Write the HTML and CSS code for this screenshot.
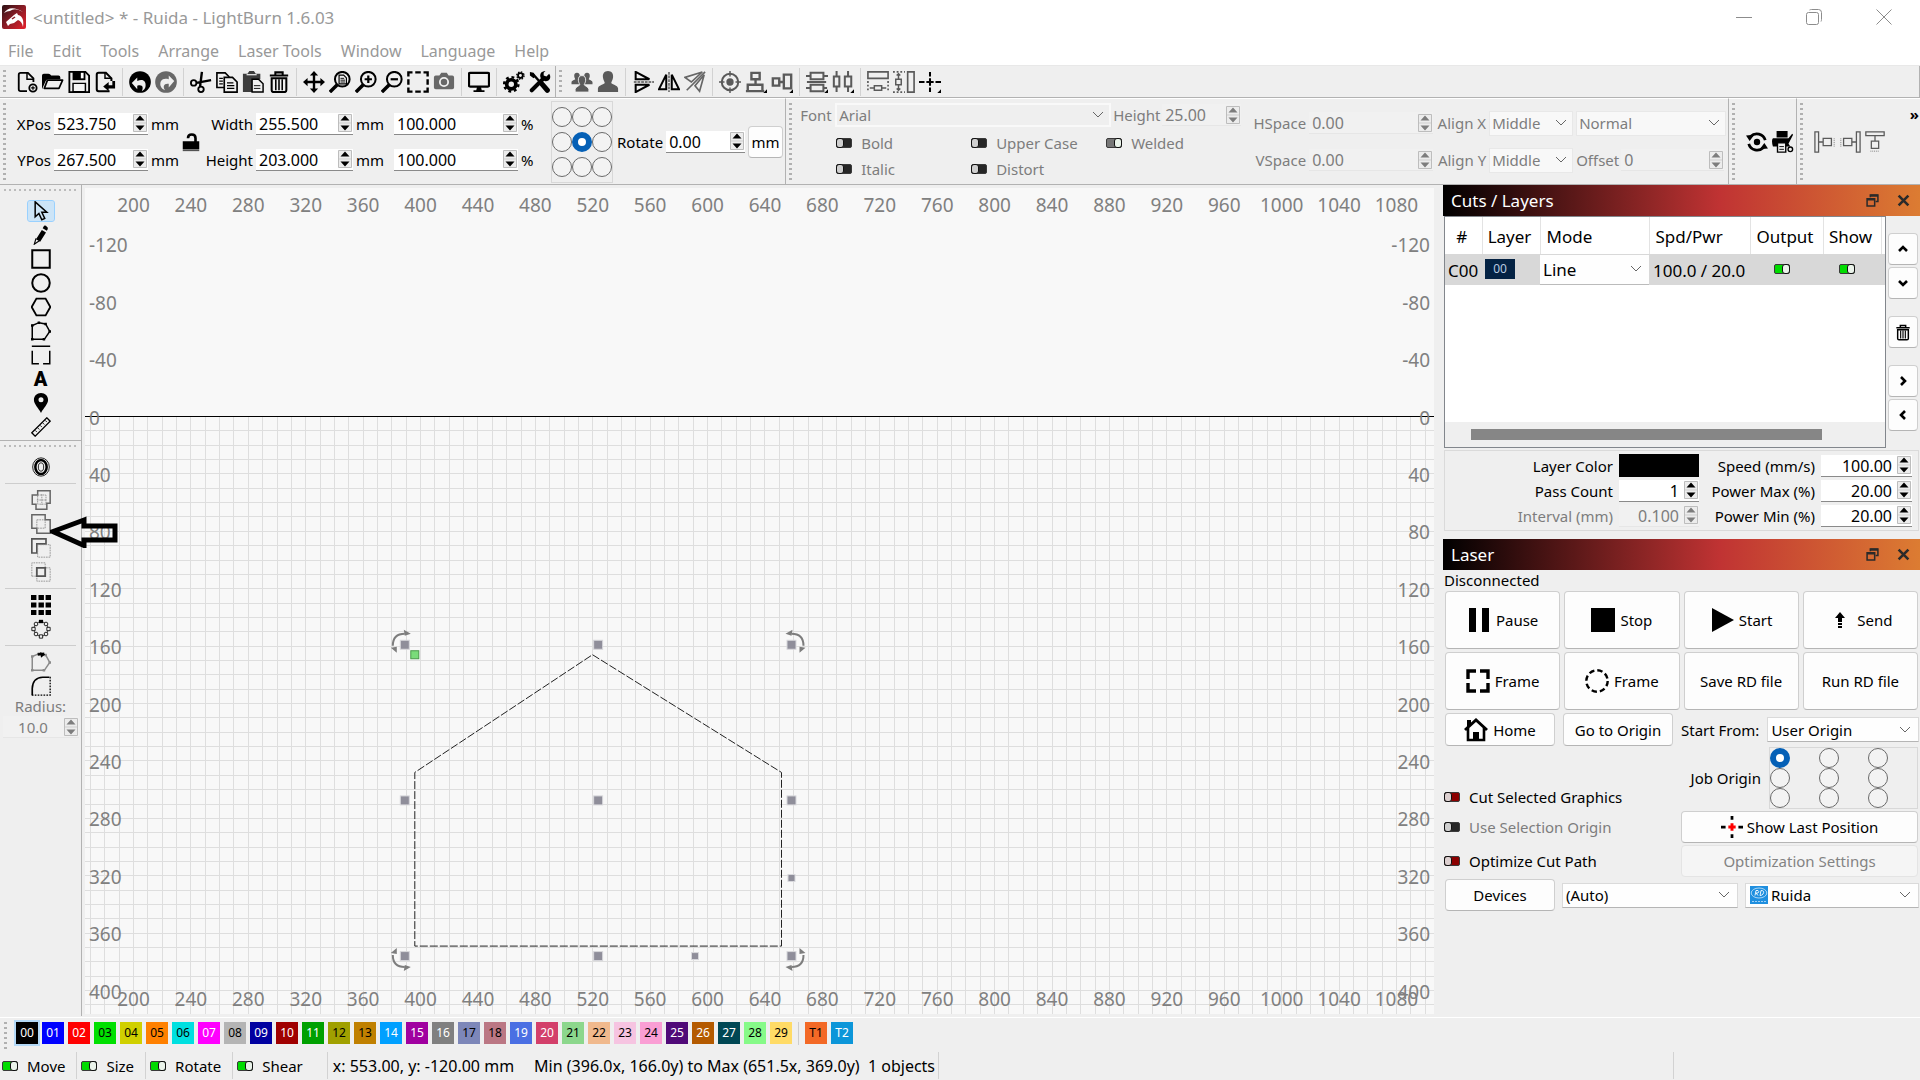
FILE: index.html
```html
<!DOCTYPE html>
<html lang="en">
<head>
<meta charset="utf-8">
<title>&lt;untitled&gt; * - Ruida - LightBurn 1.6.03</title>
<link rel="stylesheet" href="styles.css">
</head>
<body>
<svg class="defs" aria-hidden="true">
  <defs>
    <linearGradient id="logoFill" x1="0" y1="0" x2="1" y2="1"><stop offset="0" stop-color="#2a1013"/><stop offset=".5" stop-color="#8c1c26"/><stop offset="1" stop-color="#e8212c"/></linearGradient>
    <symbol id="new" viewBox="0 0 24 24"><path d="M12 22H5q-2 0-2-2V4q0-2 2-2h8l6 6v4" fill="none" stroke="#000" stroke-width="2"/><path d="M12 2v7h7" fill="none" stroke="#000" stroke-width="1.6"/><circle cx="18.5" cy="18.5" r="4" fill="none" stroke="#000" stroke-width="2"/><path d="M18.500 16.500v4M16.500 18.500h4" stroke="#000" stroke-width="1.400"/></symbol>
    <symbol id="open" viewBox="0 0 24 24"><path d="M0 20V5q0-2 2-2h5q2 0 3 2h8q2 0 2 2v2H7q-2 0-3 2z"/><path d="M6 10h16.500l-4 9H2.500z" fill="#efefef" stroke="#000" stroke-width="1.800" stroke-linejoin="round"/></symbol>
    <symbol id="save" viewBox="0 0 24 24"><path d="M1.500 1h17.500l4 4v18h-21.500z" fill="#efefef" stroke="#000" stroke-width="2"/><path d="M5 0h14v10H5z"/><path d="M14 2h3v6h-3z" fill="#fff"/><path d="M5.500 13.500h13.500v9H5.500z" fill="#f4f4f4" stroke="#000" stroke-width="1.600"/></symbol>
    <symbol id="import" viewBox="0 0 24 24"><path d="M19 11V8l-6-6H5Q3 2 3 4v16q0 2 2 2h12" fill="none" stroke="#000" stroke-width="2.200"/><path d="M12 2v6h7" fill="none" stroke="#000" stroke-width="1.600"/><path d="M10 17l6-5v3.500h4V11h3v8h-7v3z"/></symbol>
    <symbol id="undo" viewBox="0 0 24 24"><circle cx="12" cy="12" r="11.800"/><path d="M3 13l6-6v4c6-3 10 0 9 6 0 2-2 4-4 5 2-4 1-8-5-6v4z" fill="#efefef"/></symbol>
    <symbol id="redo" viewBox="0 0 24 24"><circle cx="12" cy="12" r="11.800" fill="#686868"/><path d="M21 11l-6-6v4C8 7 5 11 6 16c1 3 3 4 5 5-3-4-1-8 4-7v4z" fill="#efefef"/></symbol>
    <symbol id="cut" viewBox="0 0 24 24"><g fill="none" stroke="#000" stroke-width="2"><circle cx="4" cy="13" r="3"/><circle cx="12" cy="20" r="3"/><path d="M7 13l16-3M11 17l2-16" stroke-width="2.600"/></g></symbol>
    <symbol id="copy" viewBox="0 0 24 24"><g fill="#efefef" stroke="#000" stroke-width="1.800"><path d="M1 2h9l4 4v12H1z"/><path d="M9 7h9l5 5v11H9z"/><path d="M3.500 8h4M3.500 11h4M3.500 14h4M12 13h7M12 16h8M12 19h8" stroke-width="1.200"/></g></symbol>
    <symbol id="paste" viewBox="0 0 24 24"><path d="M1 3h5l2-3h5l2 3h5v6h-9v14H1z" fill="#3d3d3d"/><path d="M5 4h11" stroke="#ddd" stroke-width="1.500"/><path d="M11 9h7l5 5v9H11z" fill="#efefef" stroke="#000" stroke-width="1.600"/><path d="M13 16h7M13 19h7" stroke="#000"/></symbol>
    <symbol id="trash" viewBox="0 0 24 24"><path d="M8 4V1.500h8V4M2 5h20" fill="none" stroke="#000" stroke-width="2.200"/><path d="M4 8h16v13q0 2-2 2H6q-2 0-2-2z" fill="none" stroke="#000" stroke-width="2.200"/><path d="M8.500 9v12M12 9v12M15.500 9v12" stroke="#000" stroke-width="1.700"/></symbol>
    <symbol id="pan" viewBox="0 0 24 24"><path d="M12 3v18M3 12h18" stroke="#000" stroke-width="2.600"/><path d="M12 0l4.500 5h-9zM12 24l-4.500-5h9zM0 12l5-4.500v9zM24 12l-5 4.500v-9z"/></symbol>
    <symbol id="lens" viewBox="0 0 24 24"><circle cx="14.500" cy="9" r="8" fill="none" stroke="#000" stroke-width="2.200"/><path d="M9 15l-8 8" stroke="#000" stroke-width="3.800"/></symbol>
    <symbol id="zoompage" viewBox="0 0 24 24"><use href="#lens"/><path d="M11 4.500h5l3 3V14h-8z" fill="#eee" stroke="#000" stroke-width="1.300"/><path d="M12.500 8h4M12.500 10h5M12.500 12h5" stroke="#000"/></symbol>
    <symbol id="zoomin" viewBox="0 0 24 24"><use href="#lens"/><path d="M10.500 9h8M14.500 5v8" stroke="#000" stroke-width="2.400"/></symbol>
    <symbol id="zoomout" viewBox="0 0 24 24"><use href="#lens"/><path d="M10.500 9h8" stroke="#000" stroke-width="2.400"/></symbol>
    <symbol id="marquee" viewBox="0 0 24 24"><path d="M1.500 6V1.500H6M9 1.500h6M18 1.500h4.500V6M22.500 9v6M22.500 18v4.500H18M15 22.500H9M6 22.500H1.500V18M1.500 15V9" fill="none" stroke="#000" stroke-width="2.600"/></symbol>
    <symbol id="camera" viewBox="0 0 24 24"><path d="M1 7q0-2 2-2h4l2-3h6l2 3h4q2 0 2 2v11q0 2-2 2H3q-2 0-2-2z" fill="#686868"/><circle cx="12" cy="12" r="4.500" fill="none" stroke="#efefef" stroke-width="2"/></symbol>
    <symbol id="monitor" viewBox="0 0 24 24"><rect x="1" y="2" width="22" height="15" rx="1.500" fill="none" stroke="#000" stroke-width="2.600"/><path d="M10 17h4l1 4h3v2H6v-2h3z"/></symbol>
    <symbol id="gears" viewBox="0 0 24 24"><circle cx="9" cy="14.500" r="5" fill="none" stroke="#000" stroke-width="4"/><circle cx="9" cy="14.500" r="7.800" fill="none" stroke="#000" stroke-width="2.600" stroke-dasharray="3.100 3.025"/><circle cx="19" cy="5" r="2.600" fill="none" stroke="#000" stroke-width="2"/><circle cx="19" cy="5" r="4" fill="none" stroke="#000" stroke-width="1.400" stroke-dasharray="1.600 1.540"/></symbol>
    <symbol id="tools" viewBox="0 0 24 24"><path d="M4 3l15 17" stroke="#000" stroke-width="2.600"/><path d="M14 14l6 7" stroke="#000" stroke-width="5.500" stroke-linecap="round"/><path d="M3 21L15 9" stroke="#000" stroke-width="4.400" stroke-linecap="round"/><path d="M22 3l-3 3-3-1 0-3 2-2c-5 0-7 4-5 8l4 3c4 1 7-2 6-6zM1 1l4 1 2 4-2 2-4-3z"/></symbol>
    <symbol id="person" viewBox="0 0 24 24"><path d="M12 0c4 0 6 3 5.500 7-.4 3-1.500 4-2 6 1 2 7 2 7.500 6v4H1v-4c.5-4 6.500-4 7.500-6-.5-2-1.600-3-2-6C6 3 8 0 12 0z" fill="#5a5a5a"/></symbol>
    <symbol id="people" viewBox="0 0 24 24"><use href="#person" x="0" y="1" width="13" height="15"/><use href="#person" x="11" y="1" width="13" height="15"/><path d="M12 5c3 0 4 2 4 5-.3 3-1 3-1.500 5 1 2 4.500 2 5 5v3H4.500v-3c.5-3 4-3 5-5C9 13 8.300 13 8 10c0-3 1-5 4-5z" fill="#5a5a5a" stroke="#efefef"/></symbol>
    <symbol id="flipv" viewBox="0 0 24 24"><path d="M4 1l15 8H4zM4 15h15L4 23z" fill="none" stroke="#000" stroke-width="2.200"/><path d="M2 12h22" stroke="#777" stroke-width="2" stroke-dasharray="3 1"/></symbol>
    <symbol id="fliph" viewBox="0 0 24 24"><path d="M9 4v16H1zM15 4v16h8z" fill="none" stroke="#000" stroke-width="2.200"/><path d="M12 1v22" stroke="#777" stroke-width="2" stroke-dasharray="3 1"/></symbol>
    <symbol id="mirror" viewBox="0 0 24 24"><path d="M20 1L1 7l7 5zM22 4l-5 18-5-6z" fill="none" stroke="#666" stroke-width="1.800"/><path d="M3 21L23 1" stroke="#666" stroke-width="1.800"/></symbol>
    <symbol id="target" viewBox="0 0 24 24"><circle cx="12" cy="12" r="9" fill="none" stroke="#5a5a5a" stroke-width="2.200"/><circle cx="12" cy="12" r="4" fill="#5a5a5a"/><path d="M12 0v6M12 18v6M0 12h6M18 12h6" stroke="#5a5a5a" stroke-width="1.600"/></symbol>
    <symbol id="alignv" viewBox="0 0 24 24"><path d="M7 2h9v7H7zM3 15h16v7H3zM11.500 9v6M1 22h20" fill="none" stroke="#5a5a5a" stroke-width="2.600"/><path d="M24 20v4h-4z"/></symbol>
    <symbol id="alignh" viewBox="0 0 24 24"><path d="M2 8h7v8H2zM14 4h8v15h-8zM9 12h5" fill="none" stroke="#5a5a5a" stroke-width="2.600"/><path d="M24 20v4h-4z"/></symbol>
    <symbol id="distv" viewBox="0 0 24 24"><path d="M5 2h14v7H5zM5 15h14v7H5zM0 5.500h5M19 5.500h5M1 12h21M0 18.500h5M19 18.500h4" fill="none" stroke="#5a5a5a" stroke-width="2.200"/><path d="M24 20v4h-4z"/></symbol>
    <symbol id="disth" viewBox="0 0 24 24"><path d="M2 6h6v11H2zM14 6h7v11h-7zM5 0v6M5 17v6M17.500 0v6M17.500 17v6" fill="none" stroke="#5a5a5a" stroke-width="2.200"/><path d="M24 20v4h-4z"/></symbol>
    <symbol id="samew" viewBox="0 0 24 24"><path d="M1 1h22v7H1z" fill="none" stroke="#5a5a5a" stroke-width="1.800"/><path d="M1 11v12M23 11v12" stroke="#5a5a5a" stroke-dasharray="2 2" stroke-width="1.800"/><path d="M8 16h8v5H8zM3 18.500h5M16 18.500h5" fill="none" stroke="#5a5a5a" stroke-width="1.600"/></symbol>
    <symbol id="sameh" viewBox="0 0 24 24"><path d="M16 1h7v22h-7z" fill="none" stroke="#5a5a5a" stroke-width="1.800"/><path d="M0 1h13M0 23h13" stroke="#5a5a5a" stroke-dasharray="2 2" stroke-width="1.800"/><path d="M3 9h6v6H3zM6 3v6M6 15v6M4 5l2-2 2 2M4 19l2 2 2-2" fill="none" stroke="#5a5a5a" stroke-width="1.600"/></symbol>
    <symbol id="crossmove" viewBox="0 0 24 24"><path d="M12 1v5M12 8v8M12 18v5M0 12h6M8 12h8M18 12h6" stroke="#000" stroke-width="2.200"/><path d="M24 20v4h-4z"/></symbol>
    <symbol id="lock" viewBox="0 0 24 24"><path d="M1 11h22v11H1z"/><path d="M8 7q0-5 5-5t5 5v5" fill="none" stroke="#000" stroke-width="3.500"/><path d="M1 23.500h22" stroke="#000"/></symbol>
    <symbol id="rotate" viewBox="0 0 24 24"><g fill="none" stroke="#000" stroke-width="3"><path d="M21 10A9.500 9.500 0 0 0 5 6M3 14a9.500 9.500 0 0 0 16 4"/></g><path d="M0 5l9-1-5 7zM24 19l-9 1 5-7z"/><circle cx="12" cy="12" r="3.500"/></symbol>
    <symbol id="print" viewBox="0 0 24 24"><path d="M5 0h12v7H5zM1 8h17l4-5 1 1-5 10 2 3H1q-2-7 0-9z"/><path d="M6 13h9v10H6z" fill="#efefef" stroke="#000" stroke-width="1.500"/><path d="M8 17h5M8 20h5" stroke="#000"/><circle cx="20" cy="20" r="2.500" fill="none" stroke="#000" stroke-width="1.500"/></symbol>
    <symbol id="dockl" viewBox="0 0 24 24"><path d="M1 1h4v22H1zM10 8h9v8h-9zM5 12h5" fill="none" stroke="#5a5a5a" stroke-width="1.400"/><path d="M22 8v9" stroke="#777" stroke-dasharray="1 1"/></symbol>
    <symbol id="dockr" viewBox="0 0 24 24"><path d="M19 1h4v22h-4zM5 8h9v8H5zM14 12h5" fill="none" stroke="#5a5a5a" stroke-width="1.400"/><path d="M2 8v9" stroke="#777" stroke-dasharray="1 1"/></symbol>
    <symbol id="dockt" viewBox="0 0 24 24"><path d="M2 1h20v4H2zM8 11h8v8H8zM12 5v6" fill="none" stroke="#5a5a5a" stroke-width="1.400"/><path d="M7 22h10" stroke="#777" stroke-dasharray="1 1"/></symbol>
    <symbol id="pointer" viewBox="0 0 24 24"><path d="M5 1v18l4.500-4 3.500 7.500 3.500-1.600-3.500-7.400h6z" fill="none" stroke="#000" stroke-width="1.800"/></symbol>
    <symbol id="pencil" viewBox="0 0 24 24"><path d="M15 2q1-2 3-1l1 1q2 1 1 3l-1 2-5-3zM13 6l5 3-7 11-5-3z"/><path d="M6 16l-2 7 6-4" fill="none" stroke="#000" stroke-width="1.400"/></symbol>
    <symbol id="rect" viewBox="0 0 24 24"><path d="M1.500 1.500h21v21h-21z" fill="none" stroke="#000" stroke-width="2.400"/></symbol>
    <symbol id="circle" viewBox="0 0 24 24"><circle cx="12" cy="12" r="10.500" fill="none" stroke="#000" stroke-width="2.400"/></symbol>
    <symbol id="hexagon" viewBox="0 0 24 24"><path d="M.8 12L6.500 2h11l5.700 10-5.700 10h-11z" fill="none" stroke="#000" stroke-width="2.200"/></symbol>
    <symbol id="shape" viewBox="0 0 24 24"><path d="M1.500 22V5.500L9.500 2l8 1.500 5 9-6.500 9.500z" fill="none" stroke="currentColor" stroke-width="1.800"/><path d="M0 4h3v3H0zM8 .5h3v3H8zM16 2h3v3h-3zM21 11h3v3h-3zM14 20.500h3v3h-3zM0 20.500h3v3H0z" fill="currentColor"/></symbol>
    <symbol id="brackets" viewBox="0 0 24 24"><path d="M1 1.500h22M1.500 7v15.500h8M14.500 22.500h8V7" fill="none" stroke="#000" stroke-width="1.800"/></symbol>
    <symbol id="pin" viewBox="0 0 24 24"><path fill-rule="evenodd" d="M12 0c5 0 8.500 3.500 8.500 8.500S15 18 12 24C9 18 3.500 13.500 3.500 8.500S7 0 12 0zm0 5a3 3 0 1 0 0 6 3 3 0 0 0 0-6z"/></symbol>
    <symbol id="ruler" viewBox="0 0 24 24"><path d="M1 19L19 1l4 4L5 23z" fill="none" stroke="#000" stroke-width="1.600"/><path d="M5 16l2 2M8 13l2 2M11 10l2 2M14 7l2 2M17 4l2 2" stroke="#000"/></symbol>
    <symbol id="offset" viewBox="0 0 24 24"><g fill="none" stroke="#000"><ellipse cx="12" cy="12" rx="10" ry="11"/><ellipse cx="12" cy="12" rx="6.800" ry="8.500" stroke-width="3"/><ellipse cx="12" cy="12" rx="3.200" ry="5"/></g></symbol>
    <symbol id="weld" viewBox="0 0 24 24"><path d="M1.500 6H8V1h15v15h-4v7H6v-6H1.500z" fill="none" stroke="#666" stroke-width="1.800"/><path d="M8 6h10v11H8zM13 5v13M7 12h12" fill="none" stroke="#888" stroke-dasharray="2 1"/></symbol>
    <symbol id="union" viewBox="0 0 24 24"><path d="M1 1h16v6h6v16H7v-6H1z" fill="none" stroke="#666" stroke-width="1.800"/><path d="M7 7h10v10H7z" fill="none" stroke="#888" stroke-dasharray="2 1"/></symbol>
    <symbol id="subtract" viewBox="0 0 24 24"><path d="M1 1h17v6H7v11H1z" fill="none" stroke="#555" stroke-width="2"/><path d="M8 8h15v15H8z" fill="none" stroke="#888" stroke-dasharray="2 1"/></symbol>
    <symbol id="intersect" viewBox="0 0 24 24"><path d="M7 7h10v10H7z" fill="none" stroke="#555" stroke-width="2.200"/><path d="M1 17V1h16v5M18 7h5v16H7v-5M1 17h5" fill="none" stroke="#888" stroke-dasharray="2 1"/></symbol>
    <symbol id="grid" viewBox="0 0 24 24"><path d="M0 3h6.500M9 3h6.500M17.500 3H24M0 12h6.500M9 12h6.500M17.500 12H24M0 21h6.500M9 21h6.500M17.500 21H24" stroke="#000" stroke-width="6"/></symbol>
    <symbol id="radial" viewBox="0 0 24 24"><circle cx="12" cy="12" r="8.500" fill="none" stroke="#000"/><g fill="#efefef" stroke="#000"><path d="M1 10h4v4H1zM19 10h4v4h-4zM10 19h4v4h-4z"/><circle cx="6" cy="6" r="2.200"/><circle cx="18" cy="6" r="2.200"/><circle cx="6" cy="18" r="2.200"/><circle cx="18" cy="18" r="2.200"/></g><path d="M9.500 1h5v4h-5z"/></symbol>
    <symbol id="start-point" viewBox="0 0 24 24"><g color="#8a8a8a"><use href="#shape"/></g><path d="M8 3l8-1" stroke="#000" stroke-width="3"/><path d="M11 0l6 3-5 4z"/></symbol>
    <symbol id="fillet" viewBox="0 0 24 24"><path d="M1.500 23V15Q2 2 14 1.500h8" fill="none" stroke="#000" stroke-width="2"/><path d="M23 1v22H1" fill="none" stroke="#000" stroke-width="1.600" stroke-dasharray="2 1.500"/></symbol>
    <symbol id="float" viewBox="0 0 12 12"><path d="M4 3V1h7v6H9M1 4.500h7V11H1z" fill="none" stroke="#2a2a2a" stroke-width="1.400"/><path d="M1 5h7M4 1.500h7" stroke="#2a2a2a" stroke-width="2"/></symbol>
    <symbol id="x" viewBox="0 0 12 12"><path d="M1.500 1.500l9 9M10.500 1.500l-9 9" stroke="#2a2a2a" stroke-width="2.400"/></symbol>
    <symbol id="chev" viewBox="0 0 12 12"><path d="M2 8l4-4 4 4" fill="none" stroke="#000" stroke-width="2.600"/></symbol>
    <symbol id="frame" viewBox="0 0 24 24"><path d="M2 10V2h8M14 2h8v8M22 14v8h-8M10 22H2v-8" fill="none" stroke="#000" stroke-width="3.400"/></symbol>
    <symbol id="frame-round" viewBox="0 0 24 24"><circle cx="12" cy="12" r="10.700" fill="none" stroke="#000" stroke-width="2.400" stroke-dasharray="5.400 3"/></symbol>
    <symbol id="home" viewBox="0 0 24 24"><path d="M1 12L12 2l11 10" fill="none" stroke="#000" stroke-width="3"/><path d="M4 10v12h16V10" fill="none" stroke="#000" stroke-width="2.600"/><path d="M9 22v-8h6v8zM3 2h4v5l-4 3z"/></symbol>
    <symbol id="last" viewBox="0 0 24 24"><path d="M12 0v4M12 20v4M0 12h5M19 12h5" stroke="#000" stroke-width="3"/><path d="M12 8v8M8 12h8" stroke="#f00" stroke-width="3.200"/></symbol>
    <symbol id="spin" viewBox="0 0 14 18"><path d="M.5 .5h13v17H.5z" fill="#ececec" stroke="#bdbdbd"/><path d="M7 1.500l4.500 5h-9zM7 16.500l-4.500-5h9z" fill="currentColor"/><path d="M1 9h12" stroke="#cfcfcf"/></symbol>
  </defs>
</svg>

<header class="titlebar">
  <svg class="logo" viewBox="0 0 24 24" aria-hidden="true"><rect width="24" height="24" rx="2" fill="url(#logoFill)"/><path d="M2 8Q8-1 21 7q-8-5-13-1-3 0-6 2z" fill="#fff"/><path d="M4 17l8-7 3-2 1 2c5 1 6 6 5 12-1-4-2-6-5-7l-4 3-4 1-2 2z" fill="#fff"/><path d="M10 14l3-2" stroke="#8c1c26" stroke-width="1.500"/></svg>
  <h1>&lt;untitled&gt; * - Ruida - LightBurn 1.6.03</h1>
  <div class="winctl">
    <button aria-label="Minimize"><svg viewBox="0 0 16 16"><path d="M0 8.500h16"/></svg></button>
    <button aria-label="Restore"><svg viewBox="0 0 16 16"><rect x=".5" y="3.500" width="12" height="12" rx="2"/><path d="M3.500 1q1-.5 2-.5h7q3 0 3 3v7q0 1-.5 2"/></svg></button>
    <button aria-label="Close"><svg viewBox="0 0 16 16"><path d="M.5 .5l15 15M15.500 .5l-15 15"/></svg></button>
  </div>
</header>
<nav class="menu"><a href="#">File</a><a href="#">Edit</a><a href="#">Tools</a><a href="#">Arrange</a><a href="#">Laser Tools</a><a href="#">Window</a><a href="#">Language</a><a href="#">Help</a></nav>

<div class="toolbar" role="toolbar" aria-label="Main">
  <div class="tools first">
    <i class="grip"></i>
    <button aria-label="New"><svg><use href="#new"/></svg></button><button aria-label="Open"><svg><use href="#open"/></svg></button><button aria-label="Save"><svg><use href="#save"/></svg></button><button aria-label="Import"><svg><use href="#import"/></svg></button><hr>
    <button aria-label="Undo"><svg><use href="#undo"/></svg></button><button aria-label="Redo"><svg><use href="#redo"/></svg></button><hr>
    <button aria-label="Cut"><svg><use href="#cut"/></svg></button><button aria-label="Copy"><svg><use href="#copy"/></svg></button><button aria-label="Paste"><svg><use href="#paste"/></svg></button><button aria-label="Delete"><svg><use href="#trash"/></svg></button><hr>
    <button aria-label="Pan"><svg><use href="#pan"/></svg></button><button aria-label="Zoom to page"><svg><use href="#zoompage"/></svg></button><button aria-label="Zoom in"><svg><use href="#zoomin"/></svg></button><button aria-label="Zoom out"><svg><use href="#zoomout"/></svg></button><button aria-label="Frame selection"><svg><use href="#marquee"/></svg></button><button aria-label="Camera"><svg><use href="#camera"/></svg></button><hr>
    <button aria-label="Preview"><svg><use href="#monitor"/></svg></button><hr>
    <button aria-label="Settings"><svg><use href="#gears"/></svg></button><button aria-label="Device settings"><svg><use href="#tools"/></svg></button>
  </div>
  <div class="tools">
    <i class="grip"></i>
    <button aria-label="Group"><svg><use href="#people"/></svg></button><button aria-label="Ungroup"><svg><use href="#person"/></svg></button><hr>
    <button aria-label="Flip vertical"><svg><use href="#flipv"/></svg></button><button aria-label="Flip horizontal"><svg><use href="#fliph"/></svg></button><button aria-label="Mirror"><svg><use href="#mirror"/></svg></button><hr>
    <button aria-label="Center"><svg><use href="#target"/></svg></button><button aria-label="Align vertical"><svg><use href="#alignv"/></svg></button><button aria-label="Align horizontal"><svg><use href="#alignh"/></svg></button><hr>
    <button aria-label="Distribute vertical"><svg><use href="#distv"/></svg></button><button aria-label="Distribute horizontal"><svg><use href="#disth"/></svg></button><hr>
    <button aria-label="Same width"><svg><use href="#samew"/></svg></button><button aria-label="Same height"><svg><use href="#sameh"/></svg></button><button aria-label="Move laser"><svg><use href="#crossmove"/></svg></button>
  </div>
</div>

<div class="props">
  <section class="sec">
    <i class="grip"></i>
    <div class="geometry">
      <label for="xpos">XPos</label><span class="spin"><input id="xpos" value="523.750"><svg><use href="#spin"/></svg></span><span>mm</span>
      <button class="lock" aria-label="Lock aspect"><svg><use href="#lock"/></svg></button>
      <label for="w">Width</label><span class="spin"><input id="w" value="255.500"><svg><use href="#spin"/></svg></span><span>mm</span><span class="spin"><input aria-label="Width percent" value="100.000"><svg><use href="#spin"/></svg></span><span>%</span>
      <label for="ypos">YPos</label><span class="spin"><input id="ypos" value="267.500"><svg><use href="#spin"/></svg></span><span>mm</span>
      <label for="h">Height</label><span class="spin"><input id="h" value="203.000"><svg><use href="#spin"/></svg></span><span>mm</span><span class="spin"><input aria-label="Height percent" value="100.000"><svg><use href="#spin"/></svg></span><span>%</span>
    </div>
    <div class="anchor">
      <input type="radio" name="an" aria-label="Top left"><input type="radio" name="an" aria-label="Top"><input type="radio" name="an" aria-label="Top right"><input type="radio" name="an" aria-label="Left"><input type="radio" name="an" aria-label="Center" checked><input type="radio" name="an" aria-label="Right"><input type="radio" name="an" aria-label="Bottom left"><input type="radio" name="an" aria-label="Bottom"><input type="radio" name="an" aria-label="Bottom right">
    </div>
    <div class="rot"><label for="rot">Rotate</label><span class="spin"><input id="rot" value="0.00"><svg><use href="#spin"/></svg></span><button class="btn">mm</button></div>
  </section>
  <section class="sec dim">
    <i class="grip"></i>
    <div class="fontbox">
      <div class="fontrow"><label for="font">Font</label><select id="font" disabled><option>Arial</option></select><label for="fh">Height</label><span class="spin"><input id="fh" value="25.00" disabled><svg><use href="#spin"/></svg></span></div>
      <div class="checks">
        <label><input type="checkbox" class="tg" disabled>Bold</label><label><input type="checkbox" class="tg" disabled>Upper Case</label><label><input type="checkbox" class="tg" checked disabled>Welded</label>
        <label><input type="checkbox" class="tg" disabled>Italic</label><label><input type="checkbox" class="tg" disabled>Distort</label>
      </div>
    </div>
    <div class="spacing">
      <label for="hs">HSpace</label><span class="spin"><input id="hs" value="0.00" disabled><svg><use href="#spin"/></svg></span><label for="ax">Align X</label><select id="ax" disabled><option>Middle</option></select><select aria-label="Text mode" disabled><option>Normal</option></select>
      <label for="vs">VSpace</label><span class="spin"><input id="vs" value="0.00" disabled><svg><use href="#spin"/></svg></span><label for="ay">Align Y</label><select id="ay" disabled><option>Middle</option></select><span class="offset"><label for="of">Offset</label><span class="spin"><input id="of" value="0" disabled><svg><use href="#spin"/></svg></span></span>
    </div>
  </section>
  <section class="sec"><i class="grip"></i><div class="tools mini"><button aria-label="Rotary"><svg><use href="#rotate"/></svg></button><button aria-label="Print and cut"><svg><use href="#print"/></svg></button></div></section>
  <section class="sec last"><i class="grip"></i><div class="tools mini"><button aria-label="Dock left"><svg><use href="#dockl"/></svg></button><button aria-label="Dock right"><svg><use href="#dockr"/></svg></button><button aria-label="Dock top"><svg><use href="#dockt"/></svg></button></div><button class="more">»</button></section>
</div>

<main>
  <aside class="left">
    <div class="vtools">
      <i class="hgrip"></i>
      <button class="on" aria-label="Select"><svg><use href="#pointer"/></svg></button><button aria-label="Draw lines"><svg><use href="#pencil"/></svg></button><button aria-label="Rectangle"><svg><use href="#rect"/></svg></button><button aria-label="Ellipse"><svg><use href="#circle"/></svg></button><button aria-label="Polygon"><svg><use href="#hexagon"/></svg></button><button aria-label="Edit nodes"><svg><use href="#shape"/></svg></button><button aria-label="Tabs"><svg><use href="#brackets"/></svg></button><button class="letter">A</button><button aria-label="Position laser"><svg><use href="#pin"/></svg></button><button aria-label="Measure"><svg><use href="#ruler"/></svg></button>
    </div>
    <div class="vtools">
      <i class="hgrip"></i>
      <button aria-label="Offset"><svg><use href="#offset"/></svg></button><hr>
      <button aria-label="Weld"><svg><use href="#weld"/></svg></button><button aria-label="Boolean union"><svg><use href="#union"/></svg></button><button aria-label="Boolean subtract"><svg><use href="#subtract"/></svg></button><button aria-label="Boolean intersect"><svg><use href="#intersect"/></svg></button><hr>
      <button aria-label="Grid array"><svg><use href="#grid"/></svg></button><button aria-label="Circular array"><svg><use href="#radial"/></svg></button><hr>
      <button aria-label="Start point"><svg><use href="#start-point"/></svg></button><button aria-label="Radius"><svg><use href="#fillet"/></svg></button>
      <label class="radius" for="radius">Radius:</label>
      <span class="spin dim"><input id="radius" value="10.0" disabled><svg><use href="#spin"/></svg></span>
    </div>
    <svg class="callout" viewBox="0 0 70 32" aria-hidden="true"><path d="M3 15.500L34 4v6h31v14H34v5.500z" fill="none" stroke="#000" stroke-width="5" stroke-linejoin="miter"/></svg>
  </aside>

  <svg id="work" class="work" role="img" aria-label="Workspace">
    <g id="gridlines"></g>
    <g id="labels"></g>
    <g id="drawing"></g>
  </svg>

  <aside class="right">
    <div class="dock"><h2>Cuts / Layers</h2><button aria-label="Float"><svg><use href="#float"/></svg></button><button aria-label="Close"><svg><use href="#x"/></svg></button></div>
    <div class="cuts">
      <div class="list">
        <table>
          <thead><tr><th class="c1">#</th><th class="c2">Layer</th><th class="c3">Mode</th><th class="c4">Spd/Pwr</th><th class="c5">Output</th><th class="c6">Show</th><th></th></tr></thead>
          <tbody><tr><td>C00</td><td><span class="chip">00</span></td><td class="mode"><select aria-label="Mode"><option>Line</option></select></td><td>100.0 / 20.0</td><td class="mid"><input type="checkbox" class="tg" aria-label="Output" checked></td><td class="mid"><input type="checkbox" class="tg" aria-label="Show" checked></td><td></td></tr></tbody>
        </table>
        <div class="scroll"><div class="thumb"></div></div>
      </div>
      <div class="side">
        <button class="btn" aria-label="Move up"><svg><use href="#chev"/></svg></button>
        <button class="btn down" aria-label="Move down"><svg><use href="#chev"/></svg></button>
        <button class="btn gap" aria-label="Delete layer"><svg class="big"><use href="#trash"/></svg></button>
        <button class="btn gap fwd" aria-label="Next"><svg><use href="#chev"/></svg></button>
        <button class="btn back" aria-label="Previous"><svg><use href="#chev"/></svg></button>
      </div>
    </div>
    <div class="params">
      <span>Layer Color</span><span class="swatch"></span><label for="sp">Speed (mm/s)</label><span class="spin"><input id="sp" value="100.00"><svg><use href="#spin"/></svg></span>
      <label for="pc">Pass Count</label><span class="spin"><input id="pc" value="1"><svg><use href="#spin"/></svg></span><label for="pmx">Power Max (%)</label><span class="spin"><input id="pmx" value="20.00"><svg><use href="#spin"/></svg></span>
      <label for="iv" class="dim">Interval (mm)</label><span class="spin dim"><input id="iv" value="0.100" disabled><svg><use href="#spin"/></svg></span><label for="pmn">Power Min (%)</label><span class="spin"><input id="pmn" value="20.00"><svg><use href="#spin"/></svg></span>
    </div>
    <div class="dock second"><h2>Laser</h2><button aria-label="Float"><svg><use href="#float"/></svg></button><button aria-label="Close"><svg><use href="#x"/></svg></button></div>
    <p class="state">Disconnected</p>
    <div class="big4">
      <button class="btn"><svg viewBox="0 0 24 24"><path d="M2 0h7v24H2zM15 0h7v24h-7z"/></svg>Pause</button>
      <button class="btn"><svg viewBox="0 0 24 24"><path d="M0 0h24v24H0z"/></svg>Stop</button>
      <button class="btn"><svg viewBox="0 0 24 24"><path d="M2 0l22 12L2 24z"/></svg>Start</button>
      <button class="btn"><svg viewBox="0 0 24 24"><path d="M12 4l5 6h-3v4h-4v-4H7zM10 15h4v2h-4zM10 18h4v2h-4z"/></svg>Send</button>
      <button class="btn"><svg><use href="#frame"/></svg>Frame</button>
      <button class="btn"><svg><use href="#frame-round"/></svg>Frame</button>
      <button class="btn">Save RD file</button>
      <button class="btn">Run RD file</button>
    </div>
    <div class="rowA">
      <button class="btn"><svg><use href="#home"/></svg>Home</button><button class="btn">Go to Origin</button>
      <label for="sf">Start From:</label><select id="sf"><option>User Origin</option></select>
    </div>
    <div class="jobs">
      <div class="opts">
        <label><input type="checkbox" class="tg red">Cut Selected Graphics</label>
        <label class="dim"><input type="checkbox" class="tg" disabled>Use Selection Origin</label>
        <label><input type="checkbox" class="tg red">Optimize Cut Path</label>
      </div>
      <div class="acts">
        <div class="job"><span>Job Origin</span><div class="anchor wide"><input type="radio" name="jo" aria-label="Top left" checked><input type="radio" name="jo" aria-label="Top"><input type="radio" name="jo" aria-label="Top right"><input type="radio" name="jo" aria-label="Left"><input type="radio" name="jo" aria-label="Center"><input type="radio" name="jo" aria-label="Right"><input type="radio" name="jo" aria-label="Bottom left"><input type="radio" name="jo" aria-label="Bottom"><input type="radio" name="jo" aria-label="Bottom right"></div></div>
        <button class="btn"><svg><use href="#last"/></svg>Show Last Position</button>
        <button class="btn" disabled>Optimization Settings</button>
      </div>
    </div>
    <div class="rowB">
      <button class="btn">Devices</button><select aria-label="Port"><option>(Auto)</option></select>
      <div class="device"><svg viewBox="0 0 18 18" aria-hidden="true"><path fill="#1f8fdf" d="M0 0h18v18H0z"/><ellipse cx="9" cy="7" rx="7.800" ry="5" fill="none" stroke="#e6f3fd" stroke-width=".7"/><path d="M5 9.500l1-5h2q1.500 1 0 2.500H6l2 2.500M10 9.500l1-5q4 0 2 3.500-1 1.500-3 1.500z" fill="none" stroke="#fff" stroke-width=".9"/><path d="M2 15.500h14" stroke="#9fd0f5" stroke-dasharray="2 1"/></svg><select aria-label="Device"><option>Ruida</option></select></div>
    </div>
  </aside>
</main>

<div class="palette" id="palette"><i class="grip"></i></div>
<footer class="status">
  <label><input type="checkbox" class="tg" checked>Move</label><label><input type="checkbox" class="tg" checked>Size</label><label><input type="checkbox" class="tg" checked>Rotate</label><label><input type="checkbox" class="tg" checked>Shear</label>
  <output><span>x: 553.00, y: -120.00 mm</span><span>Min (396.0x, 166.0y) to Max (651.5x, 369.0y)&nbsp; 1 objects</span></output><span class="tail"></span>
</footer>
<script src="app.js"></script>
</body>
</html>
```
FILE: styles.css
```css
* { box-sizing: border-box; }
body { margin: 0; min-height: 100vh; display: flex; flex-direction: column; background: #efefef; color: #000; font: 15px/20px "Noto Sans", "Open Sans", sans-serif; overflow: hidden; }
button, input, select { font: inherit; color: inherit; margin: 0; padding: 0; border: 0; background: none; border-radius: 0; }
a { color: inherit; text-decoration: none; }
h1, h2, p, hr { margin: 0; font-weight: 400; }
svg { display: block; }
.defs { position: absolute; width: 0; height: 0; }

.titlebar { display: flex; align-items: center; height: 34px; padding-left: 2px; background: #fff; color: #999; }
.logo { width: 24px; height: 26px; }
.titlebar h1 { margin-left: 7px; padding-top: 1px; font-size: 17px; flex: 1; }
.winctl { display: flex; }
.winctl button { width: 70px; height: 34px; display: grid; place-items: center; }
.winctl button:last-child { margin-right: 1px; }
.winctl svg { width: 16px; height: 16px; fill: none; stroke: #8c8c8c; }

.menu { display: flex; gap: 19px; padding: 7px 8px 0; height: 32px; background: #fff; color: #999; font-size: 16px; border-bottom: 1px solid #e8e8e8; }

.toolbar { display: flex; height: 32px; border-bottom: 1px solid #b2b2b2; border-right: 1px solid #b2b2b2; }
.tools { display: flex; align-items: center; gap: 4px; padding-right: 4px; }
.tools.first { border-right: 1px solid #b2b2b2; }
.tools svg { width: 22px; height: 22px; }
.tools hr { width: 5px; height: 28px; border: 0; background: linear-gradient(90deg, transparent 2px, #d2d2d2 2px 3px, transparent 3px); }
.grip { width: 3px; margin: 4px 4px 4px 3px; flex: none; background: repeating-linear-gradient(#b0b0b0 0 2px, transparent 2px 5px); }
.tools .grip { align-self: stretch; margin-right: 5px; }
.tools.first .grip { margin-right: 6px; }

.props { display: flex; height: 87px; border-bottom: 1px solid #b2b2b2; }
.sec { display: flex; align-items: center; border-right: 1px solid #b2b2b2; border-top: 1px solid #fff; flex: none; }
.sec > .grip { align-self: stretch; }
.sec.last { flex: 1; border-right: 0; }
.geometry { display: grid; grid-template-columns: 41px 94px 28px 20px 48px 97px 35px 124px 30px; grid-auto-rows: 22px; row-gap: 14px; column-gap: 3px; align-items: center; }
.geometry label { text-align: right; }
.lock { grid-row: span 2; }
.lock svg { width: 18px; height: 24px; }
.spin { display: flex; align-items: center; height: 22px; background: #fff; border-bottom: 1px solid #8a8a8a; font-size: 16px; padding-right: 1px; min-width: 0; }
.spin input { flex: 1; width: 0; min-width: 0; height: 21px; padding: 1px 0 0 3px; }
.spin svg { width: 14px; height: 18px; flex: none; }
.dim { color: #7d7d7d; }
.dim .spin, .spin.dim { background: #f1f1f1; border-bottom-color: #e6e6e6; }
input:disabled, select:disabled { opacity: 1; color: #7d7d7d; }
.anchor { display: grid; grid-template-columns: repeat(3, 20px); grid-auto-rows: 20px; row-gap: 5px; padding: 5px 0; border: 1px solid #d8d8d8; }
.anchor input { appearance: none; width: 20px; height: 20px; border: 1px solid #6a6a6a; border-radius: 50%; background: #f3f3f3; }
.anchor input:checked { border: 6px solid #0560b6; background: #fff; }
.rot { display: flex; align-items: center; gap: 3px; padding: 0 2px 0 4px; }
.rot .spin { width: 79px; }
.rot .btn { width: 35px; height: 32px; }
.btn { display: flex; align-items: center; justify-content: center; gap: 5px; background: #fdfdfd; border: 1px solid #cfcfcf; border-bottom-color: #b5b5b5; border-radius: 4px; white-space: nowrap; }
.btn:disabled { color: #838383; background: #f5f5f5; border-color: #e4e4e4; }
select { appearance: none; height: 25px; min-width: 0; padding: 0 26px 0 3px; background: #fefefe url("data:image/svg+xml,%3Csvg xmlns='http://www.w3.org/2000/svg' width='12' height='8'%3E%3Cpath d='M1 1l5 5 5-5' fill='none' stroke='%23666'/%3E%3C/svg%3E") no-repeat right 7px center; border: 1px solid #dadada; border-bottom-color: #b5b5b5; }
select:disabled { background-color: #f8f8f8; border-color: #e8e8e8; }
.dim select { padding-left: 2px; padding-right: 20px; background-position: right 5px center; }

.fontbox { align-self: stretch; width: 444px; padding: 4px 0 0 4px; }
.fontrow { display: grid; grid-template-columns: 33px 276px 47px 79px; column-gap: 2px; align-items: center; }
#font { height: 24px; background-color: #efefef; border: 2px solid #f9f9f9; }
.checks { display: grid; grid-template-columns: 135px 135px 1fr; grid-auto-rows: 26px; padding: 3px 0 0 36px; align-items: center; }
.checks label, .opts label, .status label { display: flex; align-items: center; gap: 9px; white-space: nowrap; }
.spacing { display: grid; grid-template-columns: 59px 124px 50px 84px 150px; grid-auto-rows: 24px; row-gap: 13px; column-gap: 3px; align-items: center; padding: 0 2px 0 7px; }
.spacing label { text-align: right; }
.offset { display: grid; grid-template-columns: 43px 1fr; column-gap: 2px; align-items: center; }
.offset label { text-align: left; white-space: nowrap; }
.offset .spin { margin-right: 2px; }
.tg { appearance: none; position: relative; width: 16px; height: 10px; flex: none; background: #262626; border: 1px solid #3a3a3a; border-radius: 2px; }
.tg::before { content: ""; position: absolute; left: -1px; top: -1px; width: 8px; height: 10px; box-sizing: border-box; border: 1px solid #111; border-radius: 3px; background: #cfcfcf; }
.tg:checked { background: #00dc00; }
.tg:checked::before { left: 7px; background: #eaf3ea; }
.tg.red { background: #8b0000; }
.tg.red::before { background: #ddd0d0; }
.tg:checked:disabled { background: #777; }
.mini { padding: 0 2px 0 7px; }
.last .mini { gap: 3px; }
.more { align-self: flex-start; margin-left: auto; padding: 5px 1px 0 0; font-weight: 700; }

main { flex: 1; display: flex; min-height: 0; }
.left { position: relative; width: 82px; flex: none; border-right: 1px solid #b2b2b2; }
.vtools { display: flex; flex-direction: column; align-items: center; gap: 4px; padding-bottom: 3px; border-bottom: 1px solid #b2b2b2; }
.vtools + .vtools { border: 0; }
.hgrip { align-self: stretch; height: 2px; margin: 4px 3px 6px 4px; background: repeating-linear-gradient(90deg, #bcbcbc 0 2px, transparent 2px 5px); }
.vtools button { width: 26px; height: 20px; display: grid; place-items: center; }
.vtools .on { background: #cce4f7; outline: 1px solid #99d1ff; border-radius: 2px; }
.vtools svg { width: 20px; height: 20px; }
.vtools hr { align-self: stretch; height: 1px; margin: 2px 5px; border: 0; background: #cdcdcd; }
.letter { font: 900 20px/20px Roboto, sans-serif; }
.radius { color: #7d7d7d; line-height: 16px; margin-top: -2px; }
.vtools .spin { width: 76px; margin-top: -2px; }
.vtools .spin input { text-align: center; font-size: 15px; padding: 0; }
.vtools .spin svg { width: 14px; height: 18px; }
.callout { position: absolute; left: 50px; top: 331px; width: 70px; height: 32px; z-index: 2; }
.work { flex: 1; min-width: 0; margin: 3px 9px 2px 3px; background: #f8f8f8; font-size: 19px; }
.work .gl { stroke: #dedede; shape-rendering: crispEdges; }
.work .axis { stroke: #000; shape-rendering: crispEdges; }
.work text { fill: #808080; }
.work .cut { fill: none; stroke: #222; stroke-dasharray: 8 2; }
.work .handle { fill: #8f8e9a; stroke: #d8d8dc; }
.work .start { fill: #79dc79; stroke: #4a9a4a; }
.work .turn { fill: none; stroke: #7d7d7d; stroke-width: 2; }
.work .tip { fill: #7d7d7d; }

.right { width: 477px; flex: none; padding-bottom: 8px; }
.dock { display: flex; align-items: center; height: 31px; padding: 0 10px 0 8px; color: #fff; background: linear-gradient(90deg, #000, #c03333 58%, #dc7c32); }
.dock h2 { flex: 1; font-size: 17px; padding-top: 1px; }
.dock button + button { margin-left: 18px; }
.dock svg { width: 13px; height: 13px; }
.cuts { display: flex; gap: 2px; padding: 0 2px 0 1px; }
.list { flex: 1; height: 232px; display: flex; flex-direction: column; background: #fff; border: 1px solid #82868c; min-width: 0; }
table { width: 100%; table-layout: fixed; border-collapse: collapse; font-size: 17px; }
th { height: 37px; padding: 2px 3px 0 0; font-weight: 400; border-right: 1px solid #e3e3e3; }
th:last-child { border: 0; }
.c1 { width: 37px; } .c2 { width: 58px; } .c3 { width: 109px; } .c4 { width: 101px; } .c5 { width: 73px; } .c6 { width: 58px; }
th.c3, th.c4 { text-align: left; padding-left: 6px; }
td { height: 31px; padding: 2px 0 0 3px; background: #d8d8d8; white-space: nowrap; }
td:nth-child(4) { padding-left: 4px; }
.mid { text-align: center; padding: 0 10px 4px 0; }
.mid .tg { vertical-align: middle; }
.chip { display: block; width: 30px; height: 20px; margin-bottom: 4px; background: #042243; color: #b9cbe0; font-size: 12px; line-height: 20px; text-align: center; }
.mode { padding: 0; }
.mode select { width: 100%; height: 30px; font-size: 17px; border: 0; border-bottom: 1px solid #bbb; display: block; padding-top: 2px; }
.scroll { margin-top: auto; height: 25px; padding: 7px 63px 7px 26px; background: #efefef; }
.thumb { height: 11px; background: #868686; }
.side { width: 30px; display: flex; flex-direction: column; gap: 2px; padding-top: 17px; }
.side .btn { height: 32px; }
.side .gap { margin-top: 15px; }
.side svg { width: 12px; height: 12px; }
.side .big { width: 16px; height: 17px; }
.down svg { transform: rotate(180deg); }
.fwd svg { transform: rotate(90deg); }
.back svg { transform: rotate(-90deg); }
.params { display: grid; grid-template-columns: 168px 80px 1fr 91px; grid-auto-rows: 23px; row-gap: 2px; column-gap: 6px; align-items: center; margin: 2px 1px 0; padding: 3px 6px 3px 0; border: 1px solid #dadada; text-align: right; }
.params .spin input { text-align: right; padding-right: 5px; }
.swatch { height: 23px; background: #000; }
.second { margin-top: 8px; }
.state { padding-left: 1px; line-height: 21px; }
.big4 { display: grid; grid-template-columns: repeat(4, 1fr); grid-auto-rows: 58px; gap: 3px 4px; padding: 0 2px; }
.big4 svg, .rowA svg { width: 24px; height: 24px; }
.rowA, .rowB { display: grid; align-items: center; padding: 3px 1px 0 2px; }
.rowA { grid-template-columns: 110px 110px 1fr 152px; column-gap: 8px; }
.rowA .btn { height: 33px; }
.rowA label { white-space: nowrap; }
.jobs { display: grid; grid-template-columns: 1fr 237px; padding: 1px 2px 0 1px; }
.opts { display: flex; flex-direction: column; gap: 10px; padding-top: 40px; }
.opts label { height: 20px; }
.opts label:last-child { margin-top: 4px; }
.acts { display: flex; flex-direction: column; gap: 2px; }
.acts .btn { height: 32px; gap: 4px; }
.acts svg { width: 22px; height: 22px; }
.job { display: grid; grid-template-columns: 1fr 149px; column-gap: 8px; align-items: center; text-align: right; }
.wide { grid-template-columns: repeat(3, 1fr); row-gap: 0; padding: 0; }
.rowB { grid-template-columns: 110px 176px 1fr; column-gap: 7px; padding-top: 2px; }
.rowB .btn { height: 32px; }
.device { display: grid; }
.device svg { grid-area: 1 / 1; width: 18px; height: 18px; margin-left: 5px; align-self: center; z-index: 1; }
.device select { grid-area: 1 / 1; padding-left: 25px; }

.palette { display: flex; gap: 4px; height: 32px; border-top: 1px solid #fff; padding-top: 4px; margin-top: 1px; }
.palette .grip { margin: 0 5px 0 4px; }
.palette button { width: 22px; height: 22px; font-size: 12px; line-height: 22px; }
.palette .sel { outline: 2px solid #b4d9f7; }
.palette hr { width: 1px; border: 0; margin: 0 2px 4px; background: #cdcdcd; }
.status { display: flex; align-items: stretch; height: 31px; padding: 3px 0 1px; }
.status label { padding: 0 11px 0 4px; border-right: 1px solid #d2d2d2; }
.status label:nth-of-type(4) { padding-right: 24px; }
.status output { display: flex; align-items: center; gap: 20px; width: 611px; padding-left: 5px; border-right: 1px solid #d2d2d2; font-size: 16px; white-space: nowrap; overflow: hidden; }
.status label:first-child { padding-left: 2px; }
.tail { width: 247px; margin-left: auto; border-left: 1px solid #d2d2d2; }
```
FILE: app.js
```js
const NS = "http://www.w3.org/2000/svg";
const work = document.getElementById("work");
const gridG = document.getElementById("gridlines");
const labelG = document.getElementById("labels");
const drawG = document.getElementById("drawing");
const S = 1.4352;             // pixels per millimetre
const X = mm => 48.5 + (mm - 200) * S;
const Y = mm => 228.5 + mm * S;

function add(parent, tag, attrs, text) {
  const e = document.createElementNS(NS, tag);
  for (const k in attrs) e.setAttribute(k, attrs[k]);
  if (text !== undefined) e.textContent = text;
  parent.appendChild(e);
}
const snap = v => Math.floor(v) + 0.5;

function drawBed() {
  gridG.replaceChildren();
  labelG.replaceChildren();
  const w = work.clientWidth, h = work.clientHeight;
  for (let mm = 170; X(mm) < w; mm += 10)
    add(gridG, "line", { x1: snap(X(mm)), x2: snap(X(mm)), y1: Y(0), y2: h, class: "gl" });
  for (let mm = 10; Y(mm) < h; mm += 10)
    add(gridG, "line", { x1: 0, x2: w, y1: snap(Y(mm)), y2: snap(Y(mm)), class: "gl" });
  add(gridG, "line", { x1: 0, x2: w, y1: snap(Y(0)), y2: snap(Y(0)), class: "axis" });
  for (let mm = 200; X(mm) < w - 20; mm += 40)
    for (const y of [24, h - 8])
      add(labelG, "text", { x: X(mm), y, "text-anchor": "middle" }, mm);
  for (let mm = -120; Y(mm) < h - 10; mm += 40) {
    add(labelG, "text", { x: 4, y: Y(mm) + 8 }, mm);
    add(labelG, "text", { x: w - 4, y: Y(mm) + 8, "text-anchor": "end" }, mm);
  }
}

function drawShape() {
  const l = X(396), r = X(651.5), t = Y(166), b = Y(369), s = Y(248), ax = 507.5;
  add(drawG, "path", { class: "cut", d: `M${ax} ${t}L${r} ${s}V${b}H${l}V${s}Z` });
  const hl = l - 10, hr = r + 10, ht = t - 10, hb = b + 10, cx = X(523.75), cy = Y(267.5);
  for (const [x, y, z] of [[hl, ht, 9], [cx, ht, 9], [hr, ht, 9], [hl, cy, 9], [cx, cy, 9], [hr, cy, 9], [hl, hb, 9], [cx, hb, 9], [hr, hb, 9], [hr, 690, 7], [610, hb, 7]])
    add(drawG, "rect", { class: "handle", x: x - z / 2, y: y - z / 2, width: z, height: z });
  add(drawG, "rect", { class: "start", x: l - 4, y: t - 4, width: 8, height: 8 });
  for (const [x, y, a, c] of [[hl, ht, 1, 1], [hr, ht, -1, 1], [hl, hb, 1, -1], [hr, hb, -1, -1]]) {
    const g = document.createElementNS(NS, "g");
    g.setAttribute("transform", `translate(${x} ${y}) scale(${a} ${c})`);
    add(g, "path", { class: "turn", d: "M0-11Q-12-11-12 1" });
    add(g, "path", { class: "tip", d: "M-1-15l7 4-6 2zM-14 3l6 5 0-6z" });
    drawG.appendChild(g);
  }
}

const light = "#fff", dark = "#000";
const layers = [
  ["00", "#000000", light], ["01", "#0000ff", light], ["02", "#ff0000", light], ["03", "#00e000", dark],
  ["04", "#d0d000", dark], ["05", "#ff8000", dark], ["06", "#00e0e0", dark], ["07", "#ff00ff", light],
  ["08", "#b4b4b4", dark], ["09", "#0000a0", light], ["10", "#a00000", light], ["11", "#00a000", light],
  ["12", "#a0a000", dark], ["13", "#c08000", dark], ["14", "#00a0ff", light], ["15", "#a000a0", light],
  ["16", "#808080", light], ["17", "#7d87b9", dark], ["18", "#bb7784", dark], ["19", "#4a6fe3", light],
  ["20", "#d33f6a", light], ["21", "#8cd78c", dark], ["22", "#f0b98d", dark], ["23", "#f6c4e1", dark],
  ["24", "#fa9ed4", dark], ["25", "#500a78", light], ["26", "#b45a00", light], ["27", "#004754", light],
  ["28", "#86fa88", dark], ["29", "#ffdb66", dark], ["T1", "#f36926", dark], ["T2", "#0c96d9", light]
];
const palette = document.getElementById("palette");
for (const [name, bg, fg] of layers) {
  if (name === "T1") palette.append(document.createElement("hr"));
  const b = document.createElement("button");
  b.textContent = name;
  b.style.background = bg;
  b.style.color = fg;
  if (name === "00") b.className = "sel";
  palette.append(b);
}

drawBed();
drawShape();
addEventListener("resize", drawBed);
```
